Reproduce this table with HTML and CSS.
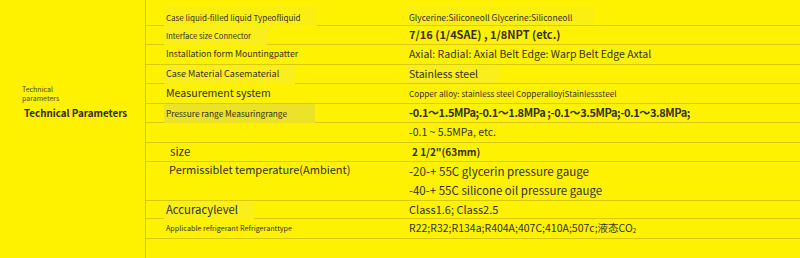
FILE: index.html
```html
<!DOCTYPE html>
<html lang="en">
<head>
<meta charset="utf-8">
<title>Technical Parameters</title>
<link rel="stylesheet" href="styles.css">
</head>
<body>
<div class="sheet">
  <div class="side">
    <div class="side-small">Technical<br>parameters</div>
    <div class="side-title">Technical Parameters</div>
  </div>
  <div class="rows">
    <div class="row h26">
      <div class="key"><span class="box box-a f8">Case liquid-filled liquid Typeofliquid</span></div>
      <div class="val"><span class="box box-a f85 pad">Glycerine:Siliconeoll Glycerine:Siliconeoll</span></div>
    </div>
    <div class="row">
      <div class="key"><span class="box box-b f76">Interface size Connector</span></div>
      <div class="val"><span class="f11 semi">7/16 (1/4SAE) , 1/8NPT (etc.)</span></div>
    </div>
    <div class="row h20">
      <div class="key"><span class="txt f87">Installation form Mountingpatter</span></div>
      <div class="val"><span class="f105">Axial: Radial: Axial Belt Edge: Warp Belt Edge Axtal</span></div>
    </div>
    <div class="row">
      <div class="key"><span class="box box-b f9">Case Material Casematerial</span></div>
      <div class="val"><span class="box box-b f105 pad">Stainless steel</span></div>
    </div>
    <div class="row h20">
      <div class="key"><span class="txt f106">Measurement system</span></div>
      <div class="val"><span class="f82">Copper alloy: stainless steel CopperalloyiStainlesssteel</span></div>
    </div>
    <div class="row">
      <div class="key"><span class="box box-c f83">Pressure range Measuringrange</span></div>
      <div class="val"><span class="f11 semi tight">-0.1～1.5MPa;-0.1～1.8MPa ;-0.1～3.5MPa;-0.1～3.8MPa;</span></div>
    </div>
    <div class="row h20">
      <div class="key"></div>
      <div class="val"><span class="f105">-0.1 ~ 5.5MPa, etc.</span></div>
    </div>
    <div class="row">
      <div class="key"><span class="txt f115 indent">size</span></div>
      <div class="val"><span class="f10 semi shift">2 1/2"(63mm)</span></div>
    </div>
    <div class="row h39 top">
      <div class="key"><span class="txt f11 shift">Permissiblet temperature(Ambient)</span></div>
      <div class="val stack"><span class="f116">-20-+ 55C glycerin pressure gauge</span><span class="f115">-40-+ 55C silicone oil pressure gauge</span></div>
    </div>
    <div class="row h18">
      <div class="key"><span class="box box-b f113">Accuracylevel</span></div>
      <div class="val"><span class="f11">Class1.6; Class2.5</span></div>
    </div>
    <div class="row h20">
      <div class="key"><span class="txt f72">Applicable refrigerant Refrigeranttype</span></div>
      <div class="val"><span class="f105">R22;R32;R134a;R404A;407C;410A;507c;液态CO<sub>2</sub></span></div>
    </div>
    <div class="row last">
      <div class="key"></div>
      <div class="val"></div>
    </div>
  </div>
</div>
</body>
</html>
```

FILE: styles.css
```css
html, body {
  margin: 0;
  padding: 0;
  background: #fff200;
}

body {
  width: 800px;
  height: 258px;
  overflow: hidden;
  font-family: "Noto Sans CJK SC", "Noto Sans", sans-serif;
  color: #34321a;
}

.sheet {
  display: flex;
  width: 800px;
  height: 258px;
  background: #fff200;
}

.side {
  width: 146px;
  flex: none;
  border-right: 1px solid #c9c02c;
  padding: 85px 0 0 22px;
  box-sizing: border-box;
  white-space: nowrap;
}

.side-small {
  font-size: 7px;
  line-height: 9px;
  color: #4a4720;
}

.side-title {
  margin: 3px 0 0 2px;
  font-size: 9.8px;
  font-weight: 600;
  line-height: 14px;
  color: #2e2c18;
}

.rows {
  flex: 1;
  display: flex;
  flex-direction: column;
}

.row {
  display: grid;
  grid-template-columns: 258px 1fr;
  height: 19px;
  border-bottom: 1px solid #d7cb0c;
  box-sizing: border-box;
  align-items: stretch;
  line-height: 1.2;
  white-space: nowrap;
}

.row.h26 { height: 26px; }
.row.h20 { height: 20px; }
.row.h18 { height: 18px; }
.row.h39 { height: 39px; }
.row.last { flex: 1; border-bottom: none; }

.key {
  display: flex;
  align-items: flex-end;
  padding-left: 18px;
}

.val {
  display: flex;
  align-items: center;
  padding-left: 5px;
}

.txt {
  padding: 0 2px;
  align-self: center;
}

.row.top .key .txt { align-self: flex-start; padding-top: 1px; }

.stack {
  flex-direction: column;
  align-items: flex-start;
  justify-content: flex-start;
  gap: 1px;
  padding-top: 0;
}

.stack span { line-height: 18px; }

.box {
  display: flex;
  align-items: center;
  align-self: stretch;
  padding: 0 16px 0 2px;
}

.val .box { padding-left: 2px; margin-left: -2px; }

.key .box { margin-bottom: -1px; }

.box-a { background: #fbef12; margin-top: 6px; padding-top: 3px; }
.box-b { background: #faee1c; }
.box-c { background: #ece22a; padding-right: 28px; }
.val .box.pad { padding-right: 22px; }

.indent { margin-left: 4px; }
.shift { margin-left: 3px; }

.tight { letter-spacing: -0.4px; }

.f72 { font-size: 7.2px; }
.f76 { font-size: 7.6px; }
.f8 { font-size: 8px; }
.f82 { font-size: 8.2px; }
.f83 { font-size: 8.3px; }
.f85 { font-size: 8.5px; }
.f87 { font-size: 8.7px; }
.f9 { font-size: 9px; }
.f10 { font-size: 10px; }
.f105 { font-size: 10.5px; }
.f106 { font-size: 10.6px; }
.f11 { font-size: 11px; }
.f113 { font-size: 11.3px; }
.f115 { font-size: 11.5px; }
.f116 { font-size: 11.6px; }
.f12 { font-size: 12px; }
.semi { font-weight: 600; }

sub { font-size: 6px; vertical-align: -1px; line-height: 0; }
```
